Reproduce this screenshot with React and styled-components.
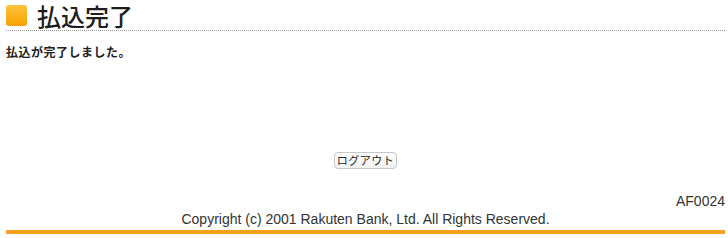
import React from 'react';
import styled, { createGlobalStyle } from 'styled-components';

const GlobalStyle = createGlobalStyle`
  body {
    margin: 0;
    background: #ffffff;
    font-family: 'Liberation Sans', 'Noto Sans CJK JP', sans-serif;
    color: #222222;
  }
`;

const App = () => {
  return (
    <>
      <GlobalStyle />
      <Page>
        <Header>
          <Mark />
          <Title>払込完了</Title>
        </Header>
        <Message>払込が完了しました。</Message>
        <ButtonRow>
          <LogoutButton type="button">ログアウト</LogoutButton>
        </ButtonRow>
        <ScreenCode>AF0024</ScreenCode>
        <Copyright>Copyright (c) 2001 Rakuten Bank, Ltd. All Rights Reserved.</Copyright>
        <Bar />
      </Page>
    </>
  );
};

const Page = styled.div`
  padding: 0 3px 0 6px;
  display: flex;
  flex-direction: column;
`;

const Header = styled.header`
  display: flex;
  align-items: center;
  gap: 10px;
  height: 30px;
  border-bottom: 1px dotted #9a9a9a;
`;

const Mark = styled.span`
  width: 21px;
  height: 21px;
  border-radius: 3px;
  background: linear-gradient(#ffc43c, #f6a000);
`;

const Title = styled.h1`
  margin: 2px 0 0;
  font-family: 'Noto Sans CJK JP', sans-serif;
  font-size: 24px;
  font-weight: 500;
  line-height: 26px;
  color: #1e1e1e;
`;

const Message = styled.p`
  margin: 13px 0 0;
  font-family: 'Noto Sans CJK JP', sans-serif;
  font-size: 12px;
  font-weight: 700;
  line-height: 16px;
  letter-spacing: 0.5px;
`;

const ButtonRow = styled.div`
  display: flex;
  justify-content: center;
  margin-top: 92px;
`;

const LogoutButton = styled.button`
  height: 17px;
  width: 63px;
  padding: 0;
  font-family: 'Noto Sans CJK JP', sans-serif;
  font-size: 11px;
  line-height: 15px;
  letter-spacing: 0.5px;
  color: #222222;
  background: linear-gradient(#ffffff, #f3f3f3);
  border: 1px solid #c6c6c6;
  border-radius: 4px;
`;

const ScreenCode = styled.div`
  margin-top: 24px;
  text-align: right;
  font-size: 14px;
  line-height: 17px;
  color: #333333;
`;

const Copyright = styled.div`
  margin-top: 1px;
  text-align: center;
  font-size: 14px;
  line-height: 17px;
  color: #333333;
`;

const Bar = styled.div`
  margin-top: 2px;
  height: 4px;
  background: #f5a01e;
`;

export default App;
